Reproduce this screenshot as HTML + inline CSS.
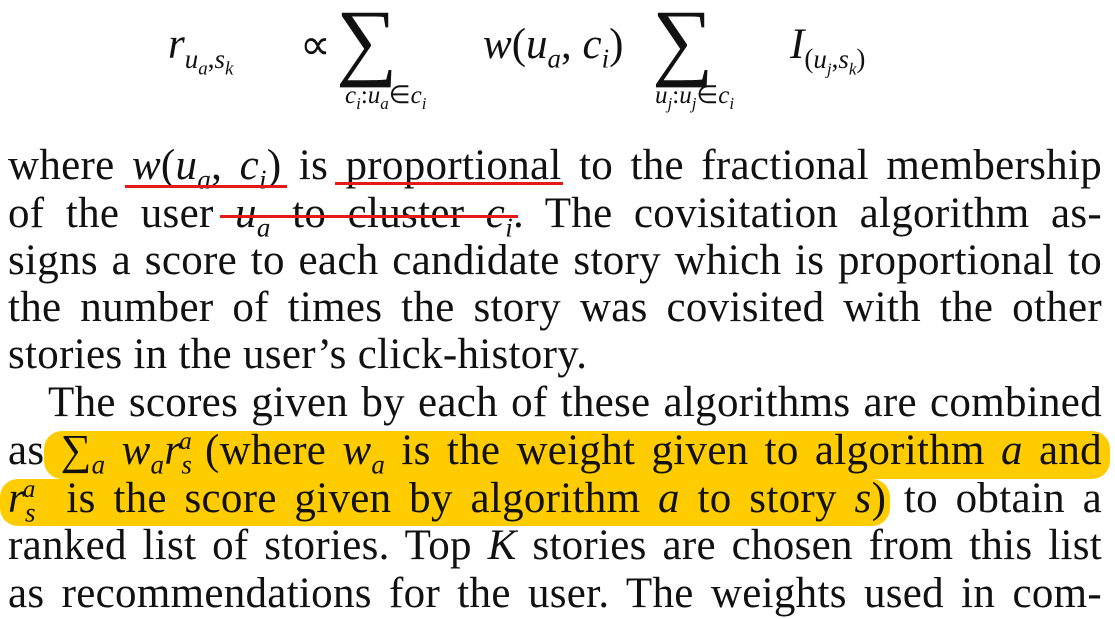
<!DOCTYPE html>
<html><head><meta charset="utf-8"><style>
body{margin:0;width:1115px;height:619px;background:#fff;overflow:hidden;position:relative;font-family:"Liberation Serif",serif;color:#111}
.l{position:absolute;left:8px;width:1094px;font-size:43px;line-height:47px;white-space:nowrap;text-align:justify;text-align-last:justify;letter-spacing:0.3px}
i{font-style:italic}
sub,sup{font-size:27px;line-height:0}
.hl{position:absolute;background:#ffcc00;border-radius:18px}
.eq{position:absolute;font-size:43px;white-space:nowrap}
.red{position:absolute;height:3px;background:#e21a1a}
</style></head><body>
<div class="eq" style="left:168px;top:20px"><i>r</i><sub><i>u<sub style="font-size:19px">a</sub></i>,<i>s<sub style="font-size:19px">k</sub></i></sub></div>
<div class="eq" style="left:300px;top:20px">∝</div>
<div class="eq" style="left:336px;top:-10px;font-size:86px">∑</div>
<div class="eq" style="left:345px;top:80px;font-size:25px"><i>c<sub style="font-size:17px">i</sub></i>:<i>u<sub style="font-size:17px">a</sub></i>∈<i>c<sub style="font-size:17px">i</sub></i></div>
<div class="eq" style="left:483px;top:20px"><i>w</i>(<i>u</i><sub><i>a</i></sub>, <i>c</i><sub><i>i</i></sub>)</div>
<div class="eq" style="left:652px;top:-10px;font-size:86px">∑</div>
<div class="eq" style="left:655px;top:80px;font-size:25px"><i>u<sub style="font-size:17px">j</sub></i>:<i>u<sub style="font-size:17px">j</sub></i>∈<i>c<sub style="font-size:17px">i</sub></i></div>
<div class="eq" style="left:790px;top:20px"><i>I</i><sub>(<i>u<sub style="font-size:17px">j</sub></i>,<i>s<sub style="font-size:17px">k</sub></i>)</sub></div>

<div class="hl" style="left:44px;top:431px;width:1066px;height:48px"></div>
<div class="hl" style="left:0;top:479px;width:890px;height:47px"></div>

<div class="l" style="top:142px">where <i>w</i>(<i>u<sub>a</sub></i>, <i>c<sub>i</sub></i>) is proportional to the fractional membership</div>
<div class="l" style="top:190px">of the user <i>u<sub>a</sub></i> to cluster <i>c<sub>i</sub></i>. The covisitation algorithm as-</div>
<div class="l" style="top:237px">signs a score to each candidate story which is proportional to</div>
<div class="l" style="top:284px">the number of times the story was covisited with the other</div>
<div class="l" style="top:331px;text-align-last:left">stories in the user’s click-history.</div>
<div class="l" style="top:379px;left:48px;width:1054px">The scores given by each of these algorithms are combined</div>
<div class="l" style="top:427px">as ∑<sub><i>a</i></sub> <i>w<sub>a</sub>r<sub>s</sub></i><sup style="font-size:25px;position:relative;left:-13px"><i>a</i></sup>(where <i>w<sub>a</sub></i> is the weight given to algorithm <i>a</i> and</div>
<div class="l" style="top:475px"><i>r<sub>s</sub></i><sup style="font-size:25px;position:relative;left:-13px"><i>a</i></sup> is the score given by algorithm <i>a</i> to story <i>s</i>) to obtain a</div>
<div class="l" style="top:522px">ranked list of stories. Top <i>K</i> stories are chosen from this list</div>
<div class="l" style="top:570px">as recommendations for the user. The weights used in com-</div>

<div class="red" style="left:125px;top:185px;width:162px"></div>
<div class="red" style="left:335px;top:182px;width:228px"></div>
<div class="red" style="left:220px;top:215px;width:298px"></div>
</body></html>
